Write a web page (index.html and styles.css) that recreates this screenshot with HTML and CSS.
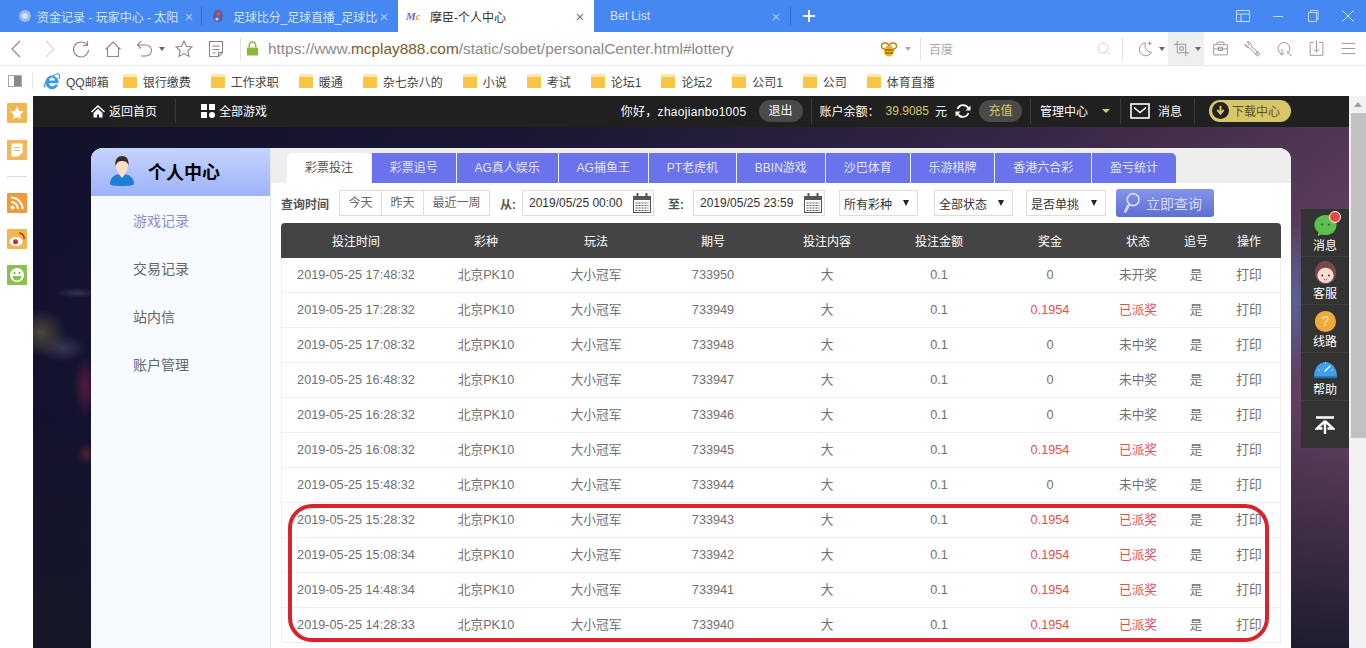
FILE: index.html
```html
<!DOCTYPE html>
<html lang="zh">
<head>
  <meta charset="UTF-8" />
  <title>摩臣-个人中心</title>
  <link rel="stylesheet" href="styles.css">
</head>
<body>

  <!-- Browser tabs -->
  <div class="tabbar">
    <div class="tab">
      <svg class="favicon" viewBox="0 0 14 14"><circle cx="7" cy="7" r="6" fill="#9db8ee"/><circle cx="7" cy="7" r="3" fill="#d5e1f8"/></svg>
      <span class="tab-title">资金记录 - 玩家中心 - 太阳</span>
      <span class="tab-close">×</span>
    </div>
    <div class="tab-sep"></div>
    <div class="tab">
      <svg class="favicon" viewBox="0 0 14 14"><ellipse cx="7" cy="7" rx="5" ry="6.500" fill="#5a5fa8"/><circle cx="7.500" cy="5" r="2" fill="#d8505a"/><circle cx="6" cy="10" r="1.500" fill="#c9d6f2"/></svg>
      <span class="tab-title tight">足球比分_足球直播_足球比</span>
      <span class="tab-close">×</span>
    </div>
    <div class="tab active">
      <span class="mc-logo">M<i>c</i></span>
      <span class="tab-title">摩臣-个人中心</span>
      <span class="tab-close">×</span>
    </div>
    <div class="tab">
      <span class="tab-title no-icon">Bet List</span>
      <span class="tab-close">×</span>
    </div>
    <div class="tab-sep"></div>
    <svg class="tab-plus" viewBox="0 0 14 14"><path d="M7 1v12M1 7h12" stroke="#fff" stroke-width="2"/></svg>
    <div class="win-btns">
      <svg viewBox="0 0 16 16"><path d="M1.500 2.500h13v11h-13zM1.500 6h13M6 6v7.500" fill="none" stroke="#c6d9f8"/></svg>
      <svg viewBox="0 0 16 16"><path d="M3 8.500h10" stroke="#c6d9f8"/></svg>
      <svg viewBox="0 0 16 16"><path d="M3.500 4.500h8v9h-8zM5.500 4.500v-2h7.500v9h-1.500" fill="none" stroke="#c6d9f8"/></svg>
      <svg viewBox="0 0 16 16"><path d="M2.500 2.500l11 11M13.500 2.500l-11 11" stroke="#dbe7fb"/></svg>
    </div>
  </div>

  <!-- Address bar -->
  <div class="toolbar">
    <svg class="tb-icon back" viewBox="0 0 20 20"><path d="M13 2l-8 8 8 8" fill="none" stroke="#888" stroke-width="1.100"/></svg>
    <svg class="tb-icon" viewBox="0 0 20 20"><path d="M7 2l8 8-8 8" fill="none" stroke="#d4d4d4" stroke-width="1.100"/></svg>
    <svg class="tb-icon" viewBox="0 0 20 20"><path d="M16 6A7.500 7.500 0 1 0 17.500 11M16.500 2v4.500H12" fill="none" stroke="#888" stroke-width="1.100"/></svg>
    <svg class="tb-icon" viewBox="0 0 20 20"><path d="M2.500 10.500L10 3l7.500 7.500M4.500 9v8.500h11V9" fill="none" stroke="#888" stroke-width="1.100"/></svg>
    <svg class="tb-icon undo" viewBox="0 0 20 20"><path d="M6 2L2.500 6 6 9.500M3 6h8a5.500 5.500 0 0 1 0 11H6" fill="none" stroke="#888" stroke-width="1.100"/></svg>
    <i class="caret"></i>
    <svg class="tb-icon star" viewBox="0 0 20 20"><path d="M10 2l2.400 5.200 5.600.7-4.100 3.900 1.100 5.600-5-2.800-5 2.800 1.100-5.600L2 7.900l5.600-.7z" fill="none" stroke="#888" stroke-width="1.100"/></svg>
    <svg class="tb-icon" viewBox="0 0 20 20"><path d="M3.500 2.500h13v11l-4 4h-9zM6.500 7h7M6.500 10.500h7M6.500 14h3M12.500 17.500v-4h4" fill="none" stroke="#888" stroke-width="1.100"/></svg>
    <div class="tb-sep first"></div>
    <svg class="lock" viewBox="0 0 14 16"><path d="M3.500 7V4.500a3.500 3.500 0 0 1 7 0V7" fill="none" stroke="#8cb733" stroke-width="1.600"/><rect x="1" y="7" width="12" height="8.500" fill="#8cb733"/></svg>
    <div class="url">https://www.<b>mcplay888.com</b>/static/sobet/personalCenter.html#lottery</div>
    <svg class="bee" viewBox="0 0 18 18"><ellipse cx="5" cy="6" rx="3.500" ry="3" fill="none" stroke="#b8860b" stroke-width="1.400"/><ellipse cx="13" cy="6" rx="3.500" ry="3" fill="none" stroke="#b8860b" stroke-width="1.400"/><ellipse cx="9" cy="11" rx="5" ry="5.500" fill="#f0b323"/><path d="M4.500 10h9M5 13h8" stroke="#6b4a10"/></svg>
    <i class="caret light"></i>
    <div class="tb-sep"></div>
    <div class="search">百度</div>
    <svg class="magnifier" viewBox="0 0 16 16"><circle cx="7" cy="7" r="5.500" fill="none" stroke="#ccc"/><path d="M11 11l4 4" stroke="#ccc"/></svg>
    <div class="tb-sep last"></div>
    <div class="tb-tools">
      <div class="tool">
        <svg viewBox="0 0 20 20"><path d="M10 3.500a7.500 7.500 0 1 0 7 11A8 8 0 0 1 10 3.500zM15 1.500v5M12.500 4h5" fill="none" stroke="#888"/></svg>
        <i class="caret"></i>
      </div>
      <div class="tool on">
        <svg viewBox="0 0 20 20"><path d="M5 1v14h14M1 5h14v14M8 8h4v4H8z" fill="none" stroke="#888"/></svg>
        <i class="caret"></i>
      </div>
      <svg class="tool-single" viewBox="0 0 20 20"><path d="M6 5.500v-3h8v3M2 5.500h16v12H2zM2 10.500h16M7.500 8.500h5v4h-5z" fill="none" stroke="#888"/></svg>
      <svg class="tool-single" viewBox="0 0 20 20"><path d="M4 2a4.500 4.500 0 0 1 4.500 5.500l9 7.500a2 2 0 0 1-3 3l-8-9A4.500 4.500 0 0 1 1 5l3 2.500 2-2z" fill="none" stroke="#888"/><circle cx="15" cy="15.500" r="1" fill="none" stroke="#888"/></svg>
      <svg class="tool-single" viewBox="0 0 20 20"><path d="M5 15.500a7 7 0 1 1 8 .5M13 13l5 6M7 10.500v7M4.500 15L7 17.500 9.500 15" fill="none" stroke="#888"/></svg>
      <svg class="tool-single" viewBox="0 0 20 20"><path d="M7 3H2.500v15h15V3H13M10 1v13M6.500 10.500L10 14l3.500-3.500" fill="none" stroke="#888"/></svg>
      <svg class="tool-single" viewBox="0 0 20 20"><path d="M2 4h16M2 10h16M2 16h16" stroke="#888"/></svg>
    </div>
  </div>

  <!-- Favourites -->
  <div class="bookmarks">
    <svg class="panel-toggle" viewBox="0 0 14 12"><rect x=".5" y=".5" width="13" height="11" fill="#fff" stroke="#aaa"/><rect x="6" y="1" width="7" height="10" fill="#888"/></svg>
    <div class="bm-sep"></div>
    <svg class="ie-logo" viewBox="0 0 18 18"><path fill-rule="evenodd" d="M2.500 10a6.500 6.500 0 0 1 13 0v1.200H6a3.300 3.300 0 0 0 6.200 1.300h3A6.500 6.500 0 0 1 2.500 10zM6.100 8.500h5.800a2.900 2.900 0 0 0-5.800 0z" fill="#3b9ae8"/><path d="M1.500 15.500C0 12 8 3 14 2c3-.5 3 2 2 5" fill="none" stroke="#3b9ae8" stroke-width="1.200"/></svg>
    <span class="bm-text first">QQ邮箱</span>
    <span class="bm"><i class="folder"></i>银行缴费</span>
    <span class="bm"><i class="folder"></i>工作求职</span>
    <span class="bm"><i class="folder"></i>暖通</span>
    <span class="bm"><i class="folder"></i>杂七杂八的</span>
    <span class="bm"><i class="folder"></i>小说</span>
    <span class="bm"><i class="folder"></i>考试</span>
    <span class="bm"><i class="folder"></i>论坛1</span>
    <span class="bm"><i class="folder"></i>论坛2</span>
    <span class="bm"><i class="folder"></i>公司1</span>
    <span class="bm"><i class="folder"></i>公司</span>
    <span class="bm"><i class="folder"></i>体育直播</span>
  </div>

  <div class="viewport">
    <!-- Browser side rail -->
    <div class="rail">
      <svg class="rail-btn" viewBox="0 0 20 20"><rect width="20" height="20" rx="1" fill="#f2b64e"/><path d="M10 3.500l2 4.300 4.700.6-3.500 3.200.9 4.700-4.100-2.300-4.100 2.300.9-4.700-3.500-3.200 4.700-.6z" fill="#fff"/></svg>
      <svg class="rail-btn" viewBox="0 0 20 20"><rect width="20" height="20" rx="1" fill="#f0b85a"/><path d="M4.500 3.500h11v9l-4 4h-7z" fill="#fff"/><path d="M7 7.500h6M7 10.500h6" stroke="#f0b85a" stroke-width="1.200"/></svg>
      <div class="rail-sep"></div>
      <svg class="rail-btn" viewBox="0 0 20 20"><rect width="20" height="20" rx="1" fill="#f29a3a"/><circle cx="5.500" cy="14.500" r="2" fill="#fff"/><path d="M4 9a7 7 0 0 1 7 7M4 4.500A11.500 11.500 0 0 1 15.500 16" fill="none" stroke="#fff" stroke-width="2"/></svg>
      <svg class="rail-btn" viewBox="0 0 20 20"><rect width="20" height="20" rx="1" fill="#f0b64f"/><ellipse cx="9" cy="12.500" rx="6.500" ry="4.500" fill="#fff"/><circle cx="8.500" cy="12.800" r="2.500" fill="#c9302c"/><path d="M12 4a5 5 0 0 1 5 6" fill="none" stroke="#c9302c" stroke-width="1.500"/></svg>
      <svg class="rail-btn" viewBox="0 0 20 20"><rect width="20" height="20" rx="1" fill="#8cc152"/><circle cx="10" cy="10" r="7" fill="#fff"/><circle cx="7.500" cy="8" r="1" fill="#6a9e35"/><circle cx="12.500" cy="8" r="1" fill="#6a9e35"/><path d="M5.500 11h9a4.500 4.500 0 0 1-9 0z" fill="#8cc152"/></svg>
    </div>

    <div class="page">
      <!-- Site top bar -->
      <div class="topbar">
        <div class="topbar-inner">
          <div class="top-left">
            <span class="top-link home">
              <svg viewBox="0 0 14 14"><path d="M7 1L0 7.500l1 1 6-5.500 6 5.500 1-1zM2.500 9v4.500h3.500v-3h2v3h3.500V9L7 4.800z" fill="#fff"/></svg>返回首页
            </span>
            <i class="top-sep"></i>
            <span class="top-link games">
              <svg viewBox="0 0 14 14"><rect width="6" height="6" fill="#fff"/><rect x="8" width="6" height="6" fill="#fff"/><rect y="8" width="6" height="6" fill="#fff"/><circle cx="11" cy="11" r="3" fill="#fff"/></svg>全部游戏
            </span>
          </div>
          <div class="top-right">
            <span class="hello">你好，zhaojianbo1005</span>
            <span class="pill logout">退出</span>
            <i class="top-sep tight s-balance"></i>
            <span class="balance-label">账户余额：</span>
            <span class="balance">39.9085</span>
            <span class="yuan">元</span>
            <svg class="refresh" viewBox="0 0 16 16"><path d="M13.500 5.500A6 6 0 0 0 2.500 6M2.500 10.500a6 6 0 0 0 11-.5" fill="none" stroke="#fff" stroke-width="1.800"/><path d="M15.500 2.500v5h-5zM.5 13.500v-5h5z" fill="#fff"/></svg>
            <span class="pill charge">充值</span>
            <i class="top-sep tight s-manage"></i>
            <span class="manage">管理中心</span>
            <i class="gold-caret"></i>
            <i class="top-sep tight s-mail"></i>
            <svg class="mail" viewBox="0 0 20 16"><rect x="1" y="1" width="18" height="14" fill="none" stroke="#fff" stroke-width="1.600"/><path d="M4 4.500l6 5 6-5" fill="none" stroke="#fff" stroke-width="1.600"/></svg>
            <span class="msg">消息</span>
            <i class="top-sep tight s-down"></i>
            <span class="download">
              <svg viewBox="0 0 16 16"><circle cx="8" cy="8" r="8" fill="#222"/><path d="M8 3.500v6M5 7.500L8 11l3-3.500" fill="none" stroke="#d8c766" stroke-width="1.800"/></svg>下载中心
            </span>
          </div>
        </div>
      </div>

      <!-- Main card -->
      <div class="card">
        <div class="side">
          <div class="side-head">
            <svg class="avatar" viewBox="0 0 26 30"><path d="M1 28c0-7 5-10 12-10s12 3 12 10c0 1-3 2-12 2S1 29 1 28z" fill="#1f7fd4"/><path d="M9 17l4 5 4-5z" fill="#fbe3cf"/><ellipse cx="13" cy="10" rx="6" ry="8" fill="#fbdcc4"/><path d="M6.500 10C5.500 3 9 0 13.500 0S20 4 19.500 10C19 6 16 5 13 5s-5 1-6.500 5z" fill="#3a2c25"/></svg>
            <span>个人中心</span>
          </div>
          <ul class="side-menu">
            <li class="current">游戏记录</li>
            <li>交易记录</li>
            <li>站内信</li>
            <li>账户管理</li>
          </ul>
        </div>

        <div class="main">
          <div class="tabs">
            <div class="lot-tab active">彩票投注</div>
            <div class="lot-tab">彩票追号</div>
            <div class="lot-tab">AG真人娱乐</div>
            <div class="lot-tab">AG捕鱼王</div>
            <div class="lot-tab">PT老虎机</div>
            <div class="lot-tab">BBIN游戏</div>
            <div class="lot-tab">沙巴体育</div>
            <div class="lot-tab">乐游棋牌</div>
            <div class="lot-tab">香港六合彩</div>
            <div class="lot-tab">盈亏统计</div>
          </div>

          <div class="filters">
            <span class="f-label">查询时间</span>
            <div class="quick">
              <span>今天</span><span>昨天</span><span class="wide">最近一周</span>
            </div>
            <span class="f-label from">从:</span>
            <div class="date">2019/05/25 00:00
              <svg viewBox="0 0 18 20"><rect x=".5" y="3.500" width="17" height="16" fill="#fff" stroke="#555"/><rect y="3" width="18" height="4" fill="#555"/><path d="M4.500 0v5M13.500 0v5" stroke="#555" stroke-width="2"/><path d="M2.500 10h13M2.500 12.500h13M2.500 15h13M2.500 17.500h13" stroke="#555" stroke-dasharray="2 1"/></svg>
            </div>
            <span class="f-label to">至:</span>
            <div class="date">2019/05/25 23:59
              <svg viewBox="0 0 18 20"><rect x=".5" y="3.500" width="17" height="16" fill="#fff" stroke="#555"/><rect y="3" width="18" height="4" fill="#555"/><path d="M4.500 0v5M13.500 0v5" stroke="#555" stroke-width="2"/><path d="M2.500 10h13M2.500 12.500h13M2.500 15h13M2.500 17.500h13" stroke="#555" stroke-dasharray="2 1"/></svg>
            </div>
            <div class="pick first">所有彩种<i></i></div>
            <div class="pick second">全部状态<i></i></div>
            <div class="pick third">是否单挑<i></i></div>
            <div class="query">
              <svg viewBox="0 0 20 26"><circle cx="12" cy="9" r="7" fill="none" stroke="#d5dcf8" stroke-width="2"/><path d="M7 15L2 24" stroke="#d5dcf8" stroke-width="3"/></svg>立即查询
            </div>
          </div>

          <table class="records">
            <colgroup>
              <col class="c-time"><col class="c-kind"><col class="c-play"><col class="c-no"><col class="c-bet">
              <col class="c-amount"><col class="c-prize"><col class="c-state"><col class="c-chase"><col class="c-op">
            </colgroup>
            <thead>
              <tr><th>投注时间</th><th>彩种</th><th>玩法</th><th>期号</th><th>投注内容</th><th>投注金额</th><th>奖金</th><th>状态</th><th>追号</th><th>操作</th></tr>
            </thead>
            <tbody>
              <tr><td>2019-05-25 17:48:32</td><td>北京PK10</td><td>大小冠军</td><td>733950</td><td>大</td><td>0.1</td><td>0</td><td>未开奖</td><td>是</td><td>打印</td></tr>
              <tr><td>2019-05-25 17:28:32</td><td>北京PK10</td><td>大小冠军</td><td>733949</td><td>大</td><td>0.1</td><td class="red">0.1954</td><td class="red">已派奖</td><td>是</td><td>打印</td></tr>
              <tr><td>2019-05-25 17:08:32</td><td>北京PK10</td><td>大小冠军</td><td>733948</td><td>大</td><td>0.1</td><td>0</td><td>未中奖</td><td>是</td><td>打印</td></tr>
              <tr><td>2019-05-25 16:48:32</td><td>北京PK10</td><td>大小冠军</td><td>733947</td><td>大</td><td>0.1</td><td>0</td><td>未中奖</td><td>是</td><td>打印</td></tr>
              <tr><td>2019-05-25 16:28:32</td><td>北京PK10</td><td>大小冠军</td><td>733946</td><td>大</td><td>0.1</td><td>0</td><td>未中奖</td><td>是</td><td>打印</td></tr>
              <tr><td>2019-05-25 16:08:32</td><td>北京PK10</td><td>大小冠军</td><td>733945</td><td>大</td><td>0.1</td><td class="red">0.1954</td><td class="red">已派奖</td><td>是</td><td>打印</td></tr>
              <tr><td>2019-05-25 15:48:32</td><td>北京PK10</td><td>大小冠军</td><td>733944</td><td>大</td><td>0.1</td><td>0</td><td>未中奖</td><td>是</td><td>打印</td></tr>
              <tr><td>2019-05-25 15:28:32</td><td>北京PK10</td><td>大小冠军</td><td>733943</td><td>大</td><td>0.1</td><td class="red">0.1954</td><td class="red">已派奖</td><td>是</td><td>打印</td></tr>
              <tr><td>2019-05-25 15:08:34</td><td>北京PK10</td><td>大小冠军</td><td>733942</td><td>大</td><td>0.1</td><td class="red">0.1954</td><td class="red">已派奖</td><td>是</td><td>打印</td></tr>
              <tr><td>2019-05-25 14:48:34</td><td>北京PK10</td><td>大小冠军</td><td>733941</td><td>大</td><td>0.1</td><td class="red">0.1954</td><td class="red">已派奖</td><td>是</td><td>打印</td></tr>
              <tr><td>2019-05-25 14:28:33</td><td>北京PK10</td><td>大小冠军</td><td>733940</td><td>大</td><td>0.1</td><td class="red">0.1954</td><td class="red">已派奖</td><td>是</td><td>打印</td></tr>
            </tbody>
          </table>
        </div>
      </div>

      <!-- Red annotation drawn over the screenshot -->
      <div class="mark"></div>

      <!-- Floating service panel -->
      <div class="float-panel">
        <div class="fp-item">
          <svg viewBox="0 0 26 26"><path d="M13 2c6.500 0 11.500 4.500 11.500 10.500S19.500 23 13 23c-1.500 0-3-.2-4-.7L5 24l.5-4C3 18 1.500 15.500 1.500 12.500 1.500 6.500 6.500 2 13 2z" fill="#5cc04f"/><circle cx="9.500" cy="12" r="1.200" fill="#2c6a28"/><circle cx="16.500" cy="12" r="1.200" fill="#2c6a28"/></svg>
          <i class="dot"></i>
          <span>消息</span>
        </div>
        <div class="fp-item">
          <svg viewBox="0 0 26 26"><ellipse cx="13" cy="12" rx="11" ry="12" fill="#7a4a48"/><ellipse cx="13" cy="15" rx="8.500" ry="8" fill="#fbdcd0"/><circle cx="9.500" cy="15" r="1" fill="#333"/><circle cx="16.500" cy="15" r="1" fill="#333"/><path d="M11 19q2 1.500 4 0" fill="none" stroke="#d65a5a"/></svg>
          <span>客服</span>
        </div>
        <div class="fp-item">
          <svg viewBox="0 0 26 26"><circle cx="13" cy="13" r="11" fill="#eeaa3f"/><text x="13" y="18" text-anchor="middle" class="q">?</text></svg>
          <span>线路</span>
        </div>
        <div class="fp-item">
          <svg viewBox="0 0 26 26"><path d="M1 21C1 0 25 0 25 21z" fill="#3f9fe8"/><path d="M1 20h24v2H1z" fill="#2c6ea8"/><path d="M12 15l6-6" stroke="#dff" stroke-width="1.500"/><path d="M5 13l2 1M13 5.500v2M21 13l-2 1" stroke="#bfe0fa"/></svg>
          <span>帮助</span>
        </div>
        <div class="fp-top">
          <svg viewBox="0 0 20 18"><path d="M1 1.500h18" stroke="#fff" stroke-width="2.500"/><path d="M10 5L2 12.500h5.500M10 5l8 7.500h-5.500M10 6v12" fill="none" stroke="#fff" stroke-width="2.400"/></svg>
        </div>
      </div>
    </div>

    <div class="scrollbar">
      <i class="scroll-up"></i>
      <div class="thumb"></div>
    </div>
  </div>

</body>
</html>
```

FILE: styles.css
```css
html, body {
  height: 100%;
}
body {
  margin: 0;
  width: 1366px;
  height: 648px;
  overflow: hidden;
  display: flex;
  flex-direction: column;
  font-family: "Liberation Sans", "Noto Sans CJK SC", sans-serif;
  font-size: 12px;
  color: #666;
}

/* browser tabs */
.tabbar {
  height: 32px;
  flex: none;
  display: flex;
  align-items: center;
  background: #4688f1;
}
.tab {
  width: 196px;
  height: 32px;
  flex: none;
  display: flex;
  align-items: center;
  padding: 0 8px;
  box-sizing: border-box;
  color: #d5e3fb;
}
.tab:first-child {
  width: 201px;
  padding-left: 18px;
  padding-right: 6px;
}
.tab.active {
  background: #fff;
  color: #333;
}
.tab-title {
  flex: 1;
  white-space: nowrap;
  overflow: hidden;
  margin-left: 9px;
}
.tab:first-child .tab-title {
  margin-left: 5px;
}
.tab-title.tight {
  letter-spacing: -.1px;
}
.tab-title.no-icon {
  margin-left: 8px;
}
.favicon {
  width: 14px;
  height: 14px;
  flex: none;
}
.tab-sep + .tab .favicon {
  margin-left: 1px;
}
.tab-sep + .tab .tab-title {
  margin-left: 8px;
}
.mc-logo {
  width: 15px;
  flex: none;
  color: #8a5cc0;
  font-size: 11px;
  font-weight: bold;
  font-style: italic;
  font-family: "Liberation Serif", serif;
}
.mc-logo i {
  color: #ee9b2c;
}
.tab-close {
  font-size: 15px;
  width: 12px;
  flex: none;
  color: #a9c6f6;
  text-align: center;
}
.tab.active .tab-close {
  color: #777;
}
.tab-sep {
  width: 1px;
  height: 18px;
  flex: none;
  background: #2f6fd3;
}
.tab-plus {
  width: 14px;
  height: 14px;
  margin-left: 11px;
}
.win-btns {
  margin-left: auto;
  display: flex;
  gap: 19px;
  padding-right: 10px;
}
.win-btns svg {
  width: 16px;
  height: 16px;
}

/* address bar */
.toolbar {
  height: 34px;
  flex: none;
  display: flex;
  align-items: center;
  background: #fff;
  border-bottom: 1px solid #e8e8e8;
  box-sizing: border-box;
  padding-left: 7px;
}
.tb-icon {
  width: 20px;
  height: 20px;
  flex: none;
  margin-right: 12px;
}
.tb-icon.undo {
  margin-right: 4px;
}
.tb-icon.star {
  margin-left: 9px;
}
.caret {
  width: 0;
  height: 0;
  flex: none;
  border: 3px solid transparent;
  border-top: 4px solid #666;
  border-bottom: 0;
}
.caret.light {
  border-top-color: #aaa;
  margin: 0 9px 0 7px;
}
.tb-sep {
  width: 1px;
  height: 24px;
  flex: none;
  background: #e2e2e2;
}
.tb-sep.first {
  margin-left: 2px;
}
.tb-sep.last {
  margin-right: 9px;
}
.lock {
  width: 13px;
  height: 15px;
  flex: none;
  margin: 0 9px 0 5px;
}
.url {
  width: 612px;
  flex: none;
  font-size: 15.4px;
  color: #8a8a8a;
  white-space: nowrap;
}
.url b {
  font-weight: normal;
  color: #7a5a2c;
}
.bee {
  width: 18px;
  height: 18px;
  flex: none;
}
.search {
  width: 167px;
  flex: none;
  padding-left: 8px;
  color: #aaa;
}
.magnifier {
  width: 14px;
  height: 14px;
  flex: none;
  margin-right: 11px;
  margin-left: 1px;
}
.tb-tools {
  display: flex;
  align-items: center;
  height: 33px;
}
.tool {
  height: 33px;
  width: 36px;
  display: flex;
  align-items: center;
  justify-content: flex-start;
  padding-left: 5px;
  box-sizing: border-box;
  gap: 5px;
}
.tool.on {
  background: #efefef;
}
.tool svg {
  width: 17px;
  height: 17px;
  flex: none;
}
.tool-single {
  width: 17px;
  height: 17px;
  flex: none;
  margin-left: 8px;
  margin-right: 7px;
}

/* favourites */
.bookmarks {
  height: 30px;
  flex: none;
  display: flex;
  align-items: center;
  background: #fff;
  color: #444;
  padding-left: 8px;
}
.panel-toggle {
  width: 14px;
  height: 12px;
  flex: none;
}
.bm-sep {
  width: 1px;
  height: 16px;
  flex: none;
  background: #e6e6e6;
  margin: 0 10px;
}
.ie-logo {
  width: 18px;
  height: 18px;
  flex: none;
}
.bm-text.first {
  margin-left: 5px;
  margin-right: 14px;
}
.bm {
  display: inline-flex;
  align-items: center;
  margin-right: 20px;
  white-space: nowrap;
}
.folder {
  width: 14px;
  height: 14px;
  flex: none;
  margin-right: 6px;
  background: linear-gradient(#fbe9b8 0 3px, #f8c544 3px);
  border-radius: 1px;
}

/* page area */
.viewport {
  flex: 1;
  display: flex;
  min-height: 0;
}
.rail {
  width: 33px;
  flex: none;
  background: #fff;
  display: flex;
  flex-direction: column;
  align-items: center;
  padding-top: 7px;
  box-sizing: border-box;
}
.rail-btn {
  width: 20px;
  height: 20px;
  flex: none;
  margin-bottom: 17px;
}
.rail-sep {
  width: 20px;
  height: 1px;
  background: #ddd;
  margin: -1px 0 16px;
}
.rail-btn:nth-child(n+4) {
  margin-bottom: 16px;
}
.page {
  flex: 1;
  position: relative;
  overflow: hidden;
  background:
    radial-gradient(ellipse 26px 24px at 8px 237px, rgba(95, 90, 60, .75), transparent),
    radial-gradient(ellipse 12px 30px at 52px 290px, rgba(130, 30, 70, .6), transparent),
    radial-gradient(ellipse 9px 11px at 53px 358px, rgba(120, 40, 60, .55), transparent),
    radial-gradient(ellipse 24px 14px at 30px 252px, rgba(120, 120, 150, .35), transparent),
    radial-gradient(ellipse 22px 5px at 44px 197px, rgba(110, 110, 130, .35), transparent),
    radial-gradient(ellipse 22px 80px at 1262px 205px, rgba(85, 115, 170, .7), transparent),
    linear-gradient(rgba(20, 20, 35, .25), transparent 30%, transparent 55%, rgba(22, 24, 38, .9) 100%),
    linear-gradient(100deg, #12112e 0%, #1a1836 35%, #3d2a4c 70%, #6b4565 100%);
}

/* site top bar */
.topbar {
  height: 31px;
  background: #202020;
}
.topbar-inner {
  width: 1200px;
  height: 100%;
  margin: 0 auto;
  padding-bottom: 2px;
  box-sizing: border-box;
  display: flex;
  align-items: center;
  justify-content: space-between;
  color: #fff;
}
.top-left,
.top-right,
.top-link {
  display: flex;
  align-items: center;
}
.top-link svg {
  width: 14px;
  height: 14px;
  margin-right: 4px;
}
.top-sep {
  width: 1px;
  height: 24px;
  background: #3a3a3a;
  margin: 0 25px 0 18px;
}
.top-sep.tight {
  height: 26px;
}
.s-balance {
  margin: 0 8px 0 0;
}
.s-manage {
  margin: 0 9px 0 8px;
}
.s-mail {
  margin: 0 9px 0 4px;
}
.s-down {
  margin: 0 10px 0 12px;
}
.hello {
  letter-spacing: .3px;
}
.pill {
  height: 22px;
  line-height: 22px;
  border-radius: 11px;
  background: #4a4a4a;
  text-align: center;
}
.logout {
  width: 44px;
  margin-left: 12px;
  margin-right: 8px;
}
.balance {
  color: #d8c766;
  margin-left: 6px;
}
.yuan {
  margin-left: 6px;
}
.refresh {
  width: 16px;
  height: 16px;
  margin: 0 8px;
}
.charge {
  width: 43px;
  color: #d8c766;
}
.gold-caret {
  width: 0;
  height: 0;
  margin-left: 14px;
  margin-right: 6px;
  border: 4px solid transparent;
  border-top: 4px solid #d8c766;
  border-bottom: 0;
}
.mail {
  width: 20px;
  height: 16px;
  margin-right: 8px;
}
.download {
  width: 82px;
  height: 22px;
  margin-left: 4px;
  padding-left: 3px;
  box-sizing: border-box;
  border-radius: 11px;
  background: #d8c766;
  color: #5a5230;
  display: flex;
  align-items: center;
}
.download svg {
  width: 17px;
  height: 17px;
  margin-right: 3px;
}

/* main card */
.card {
  width: 1200px;
  margin: 21px auto 0;
  height: 600px;
  display: flex;
  background: #fff;
  border-radius: 12px 12px 0 0;
  overflow: hidden;
}
.side {
  width: 179px;
  flex: none;
  background: #f7faff;
  border-right: 1px solid #dfe7f5;
}
.side-head {
  height: 48px;
  box-sizing: border-box;
  padding: 0 0 2px 18px;
  display: flex;
  align-items: center;
  background: linear-gradient(#c6d4fd, #9db2f9);
  color: #000;
  font-size: 18px;
  font-weight: bold;
}
.avatar {
  width: 26px;
  height: 30px;
  margin-right: 13px;
}
.side-menu {
  list-style: none;
  margin: 0;
  padding: 1px 0 0 42px;
  font-size: 14px;
  color: #666;
}
.side-menu li {
  height: 48px;
  line-height: 48px;
}
.side-menu .current {
  color: #8e8fc8;
}
.main {
  flex: 1;
  min-width: 0;
}
.tabs {
  height: 35px;
  box-sizing: border-box;
  padding: 5px 0 0 16px;
  display: flex;
  gap: 1px;
  background: #eee;
}
.lot-tab {
  padding: 0 17.9px;
  line-height: 30px;
  background: #6b73ec;
  color: #e4e6fb;
  white-space: nowrap;
}
.lot-tab.active {
  background: #fff;
  color: #555;
  border-radius: 5px 5px 0 0;
}
.lot-tab:last-child {
  border-radius: 0 5px 0 0;
}

/* filter row */
.filters {
  height: 40px;
  display: flex;
  align-items: center;
  padding-left: 10px;
}
.f-label {
  font-weight: bold;
  color: #555;
}
.quick {
  display: flex;
  height: 26px;
  margin-left: 10px;
  border: 1px solid #ddd;
  box-sizing: border-box;
}
.quick span {
  width: 41px;
  line-height: 24px;
  text-align: center;
  border-right: 1px solid #ddd;
}
.quick .wide {
  width: 65px;
  border-right: 0;
}
.f-label.from {
  margin-left: 10px;
  width: 22px;
}
.f-label.to {
  margin-left: 14px;
  width: 25px;
}
.date {
  width: 132px;
  height: 26px;
  box-sizing: border-box;
  border: 1px solid #ddd;
  padding: 0 2px 0 6px;
  display: flex;
  align-items: center;
  justify-content: space-between;
  color: #333;
}
.date svg {
  width: 18px;
  height: 20px;
}
.pick {
  width: 79px;
  height: 26px;
  box-sizing: border-box;
  border: 1px solid #ddd;
  padding: 0 5px 0 4px;
  display: flex;
  align-items: center;
  justify-content: space-between;
  color: #333;
}
.pick i {
  width: 0;
  height: 0;
  margin-right: 3px;
  border: 3px solid transparent;
  border-top: 6px solid #222;
  border-bottom: 0;
}
.pick.first {
  margin-left: 14px;
}
.pick.second {
  margin-left: 16px;
}
.pick.third {
  margin-left: 13px;
  width: 80px;
}
.query {
  width: 98px;
  height: 28px;
  margin-left: 10px;
  border-radius: 3px;
  background: linear-gradient(#8494ec, #5f70d2);
  color: #d5dcf8;
  font-size: 14px;
  display: flex;
  align-items: center;
  padding-left: 7px;
  box-sizing: border-box;
}
.query svg {
  width: 17px;
  height: 22px;
  margin-right: 6px;
}

/* records table */
.records {
  width: 1000px;
  margin-left: 10px;
  border-collapse: collapse;
  table-layout: fixed;
  font-size: 12.7px;
}
.c-time { width: 150px; }
.c-kind { width: 110px; }
.c-play { width: 110px; }
.c-no { width: 124px; }
.c-bet { width: 104px; }
.c-amount { width: 120px; }
.c-prize { width: 102px; }
.c-state { width: 74px; }
.c-chase { width: 42px; }
.c-op { width: 64px; }
.records th {
  height: 35px;
  padding: 0;
  background: #444;
  color: #fff;
  font-size: 12px;
  font-weight: normal;
}
.records th:first-child {
  border-radius: 4px 0 0 0;
}
.records th:last-child {
  border-radius: 0 4px 0 0;
}
.records td {
  height: 34px;
  padding: 0;
  line-height: 16px;
  text-align: center;
  color: #707070;
  border-bottom: 1px solid #eee;
  white-space: nowrap;
}
.records td:first-child {
  box-shadow: inset 1px 0 #eee;
}
.records td:last-child {
  box-shadow: inset -1px 0 #eee;
}
.records .red {
  color: #e2504f;
}

/* annotation */
.mark {
  position: absolute;
  left: 255px;
  top: 408px;
  width: 981px;
  height: 138px;
  box-sizing: border-box;
  border: 4px solid #d8232a;
  border-radius: 24px;
}

/* floating service panel */
.float-panel {
  position: absolute;
  left: 1268px;
  top: 113px;
  width: 48px;
  background: #333;
}
.fp-item {
  position: relative;
  height: 47px;
  border-bottom: 1px solid #3d3d3d;
  display: flex;
  flex-direction: column;
  align-items: center;
  color: #fff;
  line-height: 14px;
}
.fp-item svg {
  width: 25px;
  height: 25px;
  margin: 4px 0 1px;
  flex: none;
}
.q {
  font: bold 15px "Liberation Sans", sans-serif;
  fill: #f8d38a;
}
.dot {
  position: absolute;
  left: 28px;
  top: 2px;
  width: 10px;
  height: 10px;
  border-radius: 50%;
  border: 1px solid #fff;
  background: #e5483f;
}
.fp-top {
  height: 47px;
  display: flex;
  align-items: center;
  justify-content: center;
}
.fp-top svg {
  width: 20px;
  height: 18px;
}

/* scrollbar */
.scrollbar {
  width: 17px;
  flex: none;
  background: #f1f1f1;
  position: relative;
  padding-left: 2px;
  box-sizing: border-box;
}
.scroll-up {
  display: block;
  width: 0;
  height: 0;
  margin: 6px 0 0 3px;
  border: 4px solid transparent;
  border-bottom: 5px solid #a0a0a0;
  border-top: 0;
}
.thumb {
  margin-top: 6px;
  height: 325px;
  background: #c1c1c1;
}
```
